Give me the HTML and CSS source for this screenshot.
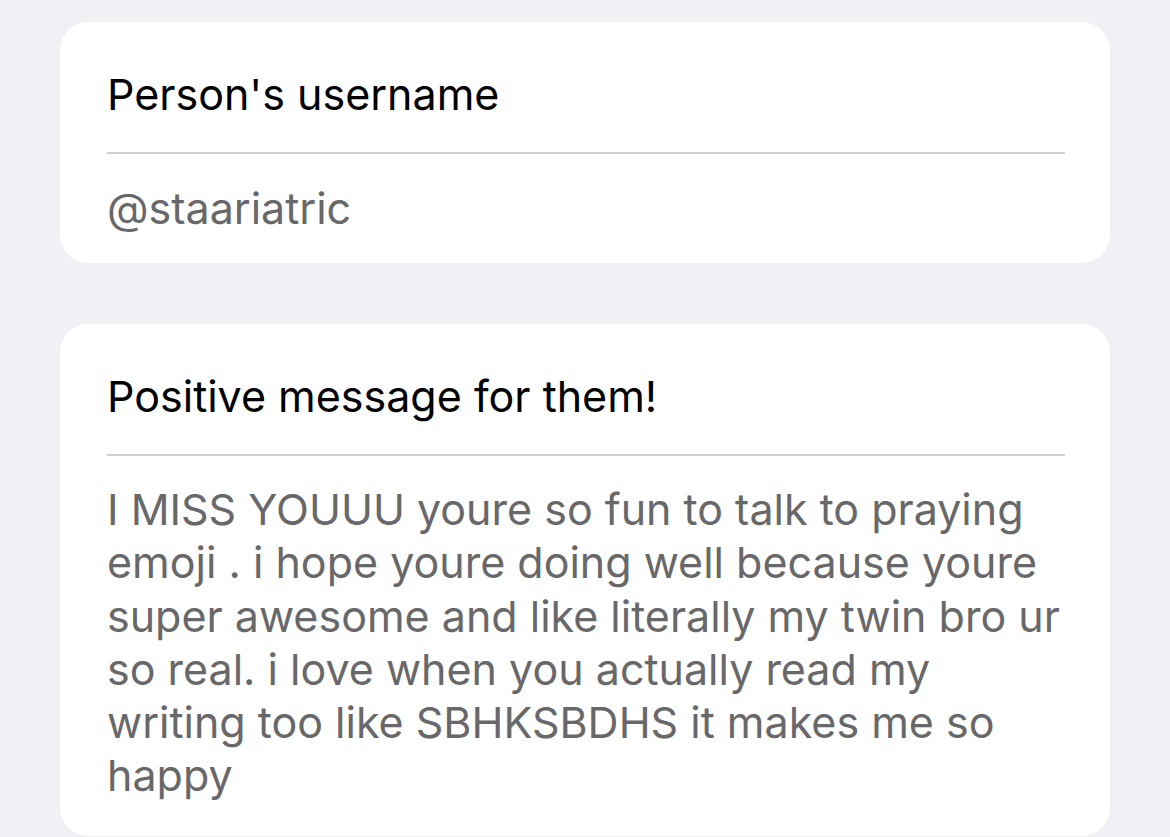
FILE: index.html
```html
<!DOCTYPE html>
<html lang="en">
<head>
  <meta charset="UTF-8" />
  <meta name="viewport" content="width=device-width, initial-scale=1.0" />
  <title>Positive message</title>
  <link rel="stylesheet" href="styles.css">
</head>
<body>
  <div class="form">
    <div class="card">
      <div class="label">Person's username</div>
      <div class="value">@staariatric</div>
    </div>

    <div class="card">
      <div class="label">Positive message for them!</div>
      <div class="value message">I MISS YOUUU youre so fun to talk to praying emoji . i hope youre doing well because youre super awesome and like literally my twin bro ur so real. i love when you actually read my writing too like SBHKSBDHS it makes me so happy</div>
    </div>
  </div>
</body>
</html>
```

FILE: styles.css
```css
body {
  margin: 0;
  background-color: #f0f0f5;
  font-family: Inter, "Noto Sans", sans-serif;
  -webkit-font-smoothing: antialiased;
}
.form {
  display: flex;
  flex-direction: column;
  gap: 61px;
  width: 1050px;
  margin-left: 60px;
  padding-top: 22px;
}
.card {
  background-color: white;
  border-radius: 28px;
  padding: 0 45px 0 47px;
}
.label {
  font-size: 43px;
  line-height: 52px;
  color: #000;
  padding: 46px 0 32px;
  border-bottom: 2px solid #d1d1d6;
}
.value {
  font-size: 43px;
  line-height: 52px;
  color: #68686a;
  padding: 28px 0 29px;
}
.message {
  line-height: 53.3px;
  padding: 27px 0 33px;
}
```
